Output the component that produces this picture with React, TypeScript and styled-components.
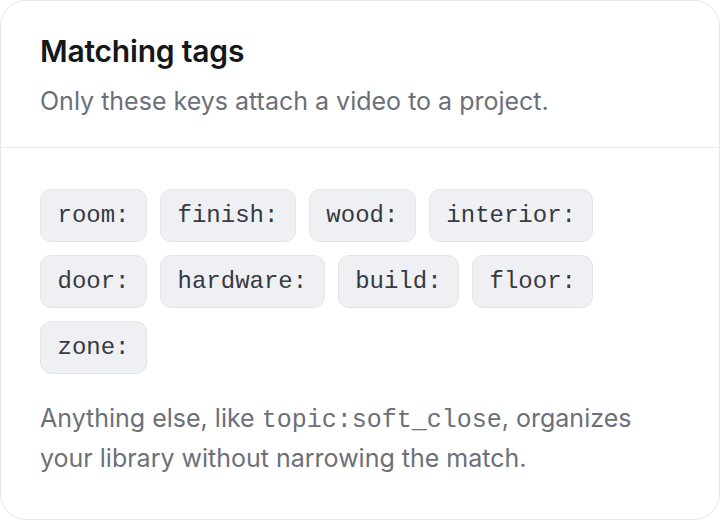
import React from "react";
import styled, { createGlobalStyle } from "styled-components";

const GlobalStyle = createGlobalStyle`
  html, body {
    margin: 0;
    padding: 0;
    background: #ffffff;
  }
  body {
    font-family: Inter, "Noto Sans", sans-serif;
    -webkit-font-smoothing: antialiased;
  }
  * { box-sizing: border-box; }
`;

const Card = styled.section`
  width: 720px;
  height: 520px;
  background: #ffffff;
  border: 1px solid #e6e7ea;
  border-radius: 26px;
  display: flex;
  flex-direction: column;
  overflow: hidden;
`;

const Header = styled.header`
  padding: 32px 39px 30px;
  border-bottom: 1px solid #ececee;
  display: flex;
  flex-direction: column;
  gap: 16px;
`;

const Title = styled.h2`
  margin: 0;
  font-size: 30px;
  line-height: 36px;
  font-weight: 600;
  color: #15171a;
  letter-spacing: -0.2px;
`;

const Subtitle = styled.p`
  margin: 0;
  font-size: 25px;
  line-height: 32px;
  color: #6b7079;
`;

const Body = styled.div`
  padding: 41px 39px;
  display: flex;
  flex-direction: column;
  gap: 24px;
`;

const TagList = styled.ul`
  list-style: none;
  margin: 0;
  padding: 0;
  display: flex;
  flex-wrap: wrap;
  gap: 13px;
`;

const Tag = styled.li`
  font-family: "Liberation Mono", "DejaVu Sans Mono", monospace;
  font-size: 24px;
  line-height: 27px;
  padding: 12px 16.5px;
  color: #363a41;
  background: #eef0f3;
  border: 1px solid #e3e5e9;
  border-radius: 11px;
`;

const Note = styled.p`
  margin: 0;
  font-size: 25px;
  line-height: 40px;
  color: #6b7079;
`;

const Code = styled.code`
  font-family: "Liberation Mono", "DejaVu Sans Mono", monospace;
  font-size: 25px;
  line-height: 1;
  color: #6b7079;
`;

const keys = [
  "room:",
  "finish:",
  "wood:",
  "interior:",
  "door:",
  "hardware:",
  "build:",
  "floor:",
  "zone:",
];

export default function App() {
  return (
    <>
      <GlobalStyle />
      <Card>
        <Header>
          <Title>Matching tags</Title>
          <Subtitle>Only these keys attach a video to a project.</Subtitle>
        </Header>
        <Body>
          <TagList>
            {keys.map((k) => (
              <Tag key={k}>{k}</Tag>
            ))}
          </TagList>
          <Note>
            Anything else, like <Code>topic:soft_close</Code>, organizes your
            library without narrowing the match.
          </Note>
        </Body>
      </Card>
    </>
  );
}
